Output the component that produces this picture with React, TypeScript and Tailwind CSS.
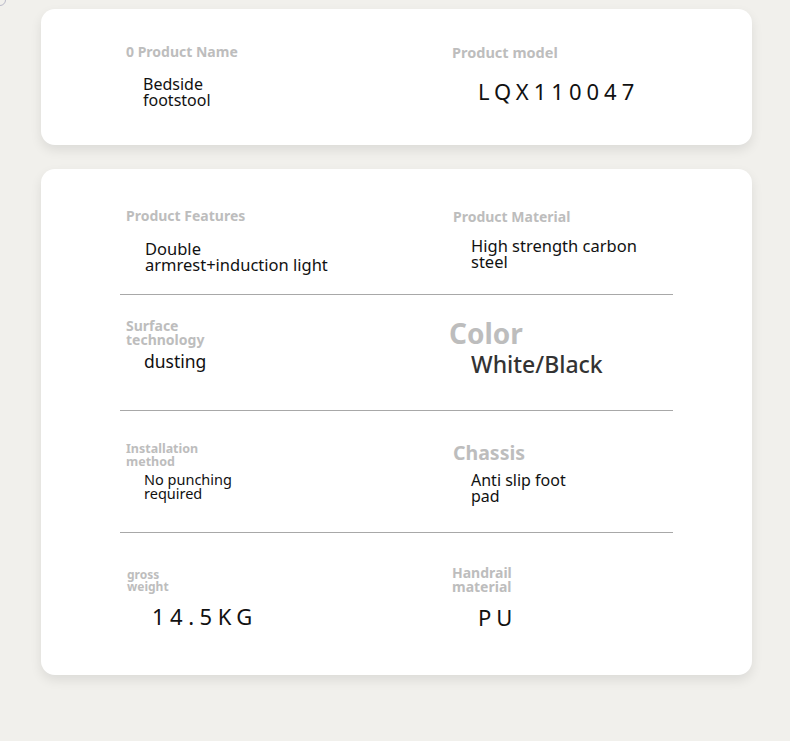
const font = { fontFamily: '"Noto Sans", "Open Sans", sans-serif' };

const Label = ({ children, className = '' }: { children: React.ReactNode; className?: string }) => (
    <div className={`font-bold text-[#bdbdbd] ${className}`}>{children}</div>
);

const App = () => {
    return (
        <div className="relative min-h-[741px] w-[790px] bg-[#f1f0ec] pt-[9px] pb-[66px]" style={font}>
            {/* stray circle in corner */}
            <div className="absolute -left-[6px] -top-[6px] h-[12px] w-[12px] rounded-full border border-[#b9b9c8]" />

            {/* card 1 */}
            <div className="ml-[41px] h-[136px] w-[711px] rounded-[14px] bg-white shadow-[0_5px_12px_rgba(0,0,0,0.09)]">
                <div className="grid grid-cols-[326px_1fr] pl-[85px]">
                    <div className="pt-[35px]">
                        <Label className="text-[14px] leading-[16px]">0 Product Name</Label>
                        <div className="mt-[16px] pl-[17px] text-[16px] leading-[16px] text-[#111]">
                            Bedside<br />footstool
                        </div>
                    </div>
                    <div className="pt-[35px]">
                        <Label className="text-[14.5px] leading-[17px]">Product model</Label>
                        <div className="mt-[17px] pl-[26px] text-[22px] leading-[26px] tracking-[5px] text-[#111]">
                            LQX110047
                        </div>
                    </div>
                </div>
            </div>

            {/* card 2 */}
            <div className="ml-[41px] mt-[24px] h-[506px] w-[711px] rounded-[14px] bg-white shadow-[0_5px_12px_rgba(0,0,0,0.09)]">
                <div className="ml-[79px] w-[553px]">
                    {/* row 1 */}
                    <div className="grid h-[126px] grid-cols-[332px_1fr] border-b border-[#a8a8a8]">
                        <div className="pl-[6px] pt-[39px]">
                            <Label className="text-[14px] leading-[16px]">Product Features</Label>
                            <div className="mt-[17px] pl-[19px] text-[16.5px] leading-[16px] text-[#111]">
                                Double<br />armrest+induction light
                            </div>
                        </div>
                        <div className="pl-[1px] pt-[40px]">
                            <Label className="text-[14px] leading-[16px]">Product Material</Label>
                            <div className="mt-[13px] pl-[18px] text-[16.5px] leading-[16px] text-[#111]">
                                High strength carbon<br />steel
                            </div>
                        </div>
                    </div>

                    {/* row 2 */}
                    <div className="grid h-[116px] grid-cols-[332px_1fr] border-b border-[#a8a8a8]">
                        <div className="pl-[6px] pt-[24px]">
                            <Label className="text-[14px] leading-[14px]">Surface<br />technology</Label>
                            <div className="mt-[3px] pl-[18px] text-[17.5px] leading-[22px] text-[#111]">dusting</div>
                        </div>
                        <div className="pt-[23px]">
                            <Label className="-ml-[3px] text-[28px] leading-[30px]">Color</Label>
                            <div className="mt-[1px] pl-[19px] text-[23px] font-medium leading-[30px] text-[#333]">
                                White/Black
                            </div>
                        </div>
                    </div>

                    {/* row 3 */}
                    <div className="grid h-[122px] grid-cols-[332px_1fr] border-b border-[#a8a8a8]">
                        <div className="pl-[6px] pt-[31px]">
                            <Label className="text-[12.5px] leading-[13px]">Installation<br />method</Label>
                            <div className="mt-[4px] pl-[18px] text-[14.5px] leading-[14px] text-[#111]">
                                No punching<br />required
                            </div>
                        </div>
                        <div className="pl-[1px] pt-[30px]">
                            <Label className="text-[19.5px] leading-[24px]">Chassis</Label>
                            <div className="mt-[7px] pl-[18px] text-[16px] leading-[16px] text-[#111]">
                                Anti slip foot<br />pad
                            </div>
                        </div>
                    </div>

                    {/* row 4 */}
                    <div className="grid h-[141px] grid-cols-[332px_1fr]">
                        <div className="pl-[7px] pt-[36px]">
                            <Label className="text-[12px] leading-[12px]">gross<br />weight</Label>
                            <div className="mt-[10px] pl-[25px] text-[22px] leading-[26px] tracking-[5.5px] text-[#111]">14.5KG</div>
                        </div>
                        <div className="pt-[33px]">
                            <Label className="text-[14px] leading-[14px]">Handrail<br />material</Label>
                            <div className="mt-[10px] pl-[26px] text-[22px] leading-[26px] tracking-[5px] text-[#111]">PU</div>
                        </div>
                    </div>
                </div>
            </div>
        </div>
    );
};

export default App;
